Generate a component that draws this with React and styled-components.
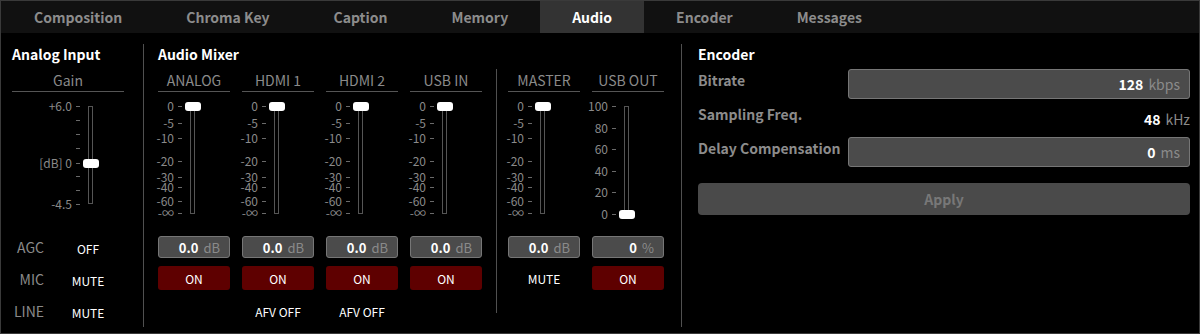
import React from 'react';
import styled, { createGlobalStyle } from 'styled-components';

const GlobalStyle = createGlobalStyle`
	html, body {
		margin: 0;
		padding: 0;
		background: #000;
	}
	body {
		font-family: "Noto Sans CJK JP", "Noto Sans", sans-serif;
		color: #fff;
	}
	* {
		box-sizing: border-box;
	}
`

const TABS = ['Composition', 'Chroma Key', 'Caption', 'Memory', 'Audio', 'Encoder', 'Messages'];

const DB_MARKS = [
	{ label: '0', y: 0 },
	{ label: '-5', y: 17 },
	{ label: '-10', y: 32 },
	{ label: '-20', y: 55 },
	{ label: '-30', y: 71 },
	{ label: '-40', y: 81 },
	{ label: '-60', y: 95 },
	{ label: '-∞', y: 107 },
];

const PERCENT_MARKS = [
	{ label: '100', y: 0 },
	{ label: '80', y: 22 },
	{ label: '60', y: 43 },
	{ label: '40', y: 65 },
	{ label: '20', y: 86 },
	{ label: '0', y: 108 },
];

const GAIN_MARKS = [
	{ label: '+6.0', y: 0 },
	{ label: '', y: 14 },
	{ label: '', y: 28 },
	{ label: '', y: 42 },
	{ label: '[dB] 0', y: 57 },
	{ label: '', y: 70 },
	{ label: '', y: 84 },
	{ label: '-4.5', y: 98 },
];

const Fader = ({ marks, height, handle, indent }) => {
	return (
		<FaderBox $height={height} $indent={indent}>
			<Scale>
				{marks.map((m, i) => (
					<Mark key={i} $y={m.y}>
						<MarkLabel>{m.label}</MarkLabel>
						<Tick />
					</Mark>
				))}
			</Scale>
			<Track $height={height}>
				<Handle $y={handle} />
			</Track>
		</FaderBox>
	)
}

const ValueBox = ({ value, unit, large }) => {
	return (
		<Field $large={large}>
			<FieldValue>{value}</FieldValue>
			<FieldUnit>{unit}</FieldUnit>
		</Field>
	)
}

const Channel = ({ name, marks = DB_MARKS, handle = 0, value = '0.0', unit = 'dB', mute, footer }) => {
	return (
		<ChannelColumn>
			<ChannelHeader>{name}</ChannelHeader>
			<Fader marks={marks} height={108} handle={handle} />
			<ValueBox value={value} unit={unit} />
			{mute ? <PlainState>MUTE</PlainState> : <OnButton>ON</OnButton>}
			<Footer>{footer}</Footer>
		</ChannelColumn>
	)
}

const App = () => {
	return (
		<>
			<GlobalStyle />
			<Frame>
				<TabBar>
					{TABS.map(t => (
						<Tab key={t} $active={t === 'Audio'}>{t}</Tab>
					))}
				</TabBar>
				<Content>
					<AnalogSection>
						<SectionTitle>Analog Input</SectionTitle>
						<ChannelHeader>Gain</ChannelHeader>
						<Fader marks={GAIN_MARKS} height={98} handle={57} indent={44} />
						<StateGrid>
							<StateLabel>AGC</StateLabel>
							<StateValue>OFF</StateValue>
							<StateLabel>MIC</StateLabel>
							<StateValue>MUTE</StateValue>
							<StateLabel>LINE</StateLabel>
							<StateValue>MUTE</StateValue>
						</StateGrid>
					</AnalogSection>

					<MixerSection>
						<SectionTitle>Audio Mixer</SectionTitle>
						<MixerRow>
							<ChannelGroup>
								<Channel name="ANALOG" />
								<Channel name="HDMI 1" footer="AFV OFF" />
								<Channel name="HDMI 2" footer="AFV OFF" />
								<Channel name="USB IN" />
							</ChannelGroup>
							<GroupDivider />
							<ChannelGroup>
								<Channel name="MASTER" mute />
								<Channel name="USB OUT" marks={PERCENT_MARKS} handle={108.5} value="0" unit="%" />
							</ChannelGroup>
						</MixerRow>
					</MixerSection>

					<EncoderSection>
						<SectionTitle>Encoder</SectionTitle>
						<EncoderGrid>
							<EncoderLabel>Bitrate</EncoderLabel>
							<ValueBox value="128" unit="kbps" large />
							<EncoderLabel>Sampling Freq.</EncoderLabel>
							<StaticValue>
								<FieldValue>48</FieldValue>
								<FieldUnit>kHz</FieldUnit>
							</StaticValue>
							<EncoderLabel>Delay Compensation</EncoderLabel>
							<ValueBox value="0" unit="ms" large />
						</EncoderGrid>
						<ApplyButton>Apply</ApplyButton>
					</EncoderSection>
				</Content>
			</Frame>
		</>
	)
}

const Frame = styled.div`
	width: 1200px;
	height: 334px;
	border: 1px solid #3a3a3a;
	background: #000;
	display: flex;
	flex-direction: column;
	overflow: hidden;
`
const TabBar = styled.div`
	display: flex;
	height: 32px;
	padding-left: 1px;
	background: #111;
	flex-shrink: 0;
`
const Tab = styled.div`
	padding: 0 32px;
	height: 32px;
	line-height: 32px;
	font-size: 14px;
	font-weight: 700;
	color: ${props => props.$active ? '#fff' : '#8c8c8c'};
	background: ${props => props.$active ? '#333' : 'transparent'};
	white-space: nowrap;
`
const Content = styled.div`
	flex: 1;
	display: flex;
	padding: 11px 0 10px 0;
`
const AnalogSection = styled.div`
	width: 143px;
	padding-left: 11px;
	padding-right: 19px;
	border-right: 1px solid #505050;
	flex-shrink: 0;
`
const MixerSection = styled.div`
	width: 538px;
	padding-left: 14px;
	border-right: 1px solid #505050;
	flex-shrink: 0;
	display: flex;
	flex-direction: column;
`
const EncoderSection = styled.div`
	flex: 1;
	padding: 0 9px 0 16px;
`
const SectionTitle = styled.div`
	font-size: 14px;
	font-weight: 700;
	line-height: 20px;
	height: 20px;
	margin-bottom: 5px;
	color: #fff;
	white-space: nowrap;
`
const MixerRow = styled.div`
	display: flex;
	flex: 1;
`
const ChannelGroup = styled.div`
	display: flex;
	gap: 12px;
`
const GroupDivider = styled.div`
	width: 1px;
	background: #505050;
	margin: 0 11px 14px 14px;
`
const ChannelColumn = styled.div`
	width: 72px;
	display: flex;
	flex-direction: column;
`
const ChannelHeader = styled.div`
	height: 23px;
	line-height: 22px;
	font-size: 14px;
	color: #8a8a8a;
	text-align: center;
	border-bottom: 1px solid #555;
	white-space: nowrap;
`
const FaderBox = styled.div`
	position: relative;
	display: flex;
	gap: 8px;
	margin-top: 10px;
	padding-top: 4px;
	padding-left: ${props => props.$indent || 0}px;
	height: ${props => props.$height + 8}px;
`
const Scale = styled.div`
	position: relative;
	width: 24px;
`
const Mark = styled.div`
	position: absolute;
	right: 0;
	top: ${props => props.$y - 5}px;
	height: 10px;
	display: flex;
	align-items: center;
	gap: 4px;
`
const MarkLabel = styled.span`
	font-size: 12px;
	line-height: 10px;
	color: #8a8a8a;
	white-space: nowrap;
`
const Tick = styled.span`
	width: 4px;
	height: 1px;
	background: #6a6a6a;
`
const Track = styled.div`
	position: relative;
	width: 5px;
	height: ${props => props.$height}px;
	border: 1px solid #555;
`
const Handle = styled.div`
	position: absolute;
	left: -6.5px;
	top: ${props => props.$y - 5.5}px;
	width: 16px;
	height: 9px;
	border-radius: 3px;
	background: #fff;
`
const Field = styled.div`
	height: ${props => props.$large ? 30 : 22}px;
	margin-top: ${props => props.$large ? 0 : 18}px;
	background: #4b4b4b;
	border: 1px solid #767676;
	border-radius: 3px;
	display: flex;
	align-items: center;
	justify-content: flex-end;
	gap: 5px;
	padding-right: 9px;
	font-size: ${props => props.$large ? 14 : 13}px;
`
const FieldValue = styled.span`
	font-weight: 700;
	color: #fff;
`
const FieldUnit = styled.span`
	color: #8a8a8a;
`
const OnButton = styled.div`
	height: 24px;
	margin-top: 8px;
	border-radius: 3px;
	background: #5e0000;
	color: #fff;
	font-size: 12px;
	font-weight: 400;
	display: flex;
	align-items: center;
	justify-content: center;
`
const PlainState = styled(OnButton)`
	background: transparent;
`
const Footer = styled.div`
	height: 20px;
	margin-top: 12px;
	line-height: 20px;
	font-size: 12px;
	font-weight: 400;
	text-align: center;
	color: #fff;
	white-space: nowrap;
`
const StateGrid = styled.div`
	display: grid;
	grid-template-columns: 32px 64px;
	grid-auto-rows: 32px;
	column-gap: 12px;
	margin-top: 23px;
	align-items: center;
`
const StateLabel = styled.div`
	font-size: 14px;
	color: #8a8a8a;
	text-align: right;
`
const StateValue = styled.div`
	font-size: 12px;
	font-weight: 400;
	color: #fff;
	text-align: center;
	padding-top: 3px;
`
const EncoderGrid = styled.div`
	display: grid;
	grid-template-columns: 150px 1fr;
	grid-auto-rows: 30px;
	row-gap: 4px;
	align-items: center;
`
const EncoderLabel = styled.div`
	font-size: 14px;
	font-weight: 700;
	color: #8c8c8c;
	white-space: nowrap;
	align-self: start;
	line-height: 22px;
`
const StaticValue = styled.div`
	display: flex;
	justify-content: flex-end;
	gap: 5px;
	font-size: 14px;
	padding-top: 2px;
`
const ApplyButton = styled.div`
	margin-top: 16px;
	height: 32px;
	border-radius: 4px;
	background: #4a4a4a;
	color: #787878;
	font-size: 14px;
	font-weight: 700;
	display: flex;
	align-items: center;
	justify-content: center;
`

export default App;
